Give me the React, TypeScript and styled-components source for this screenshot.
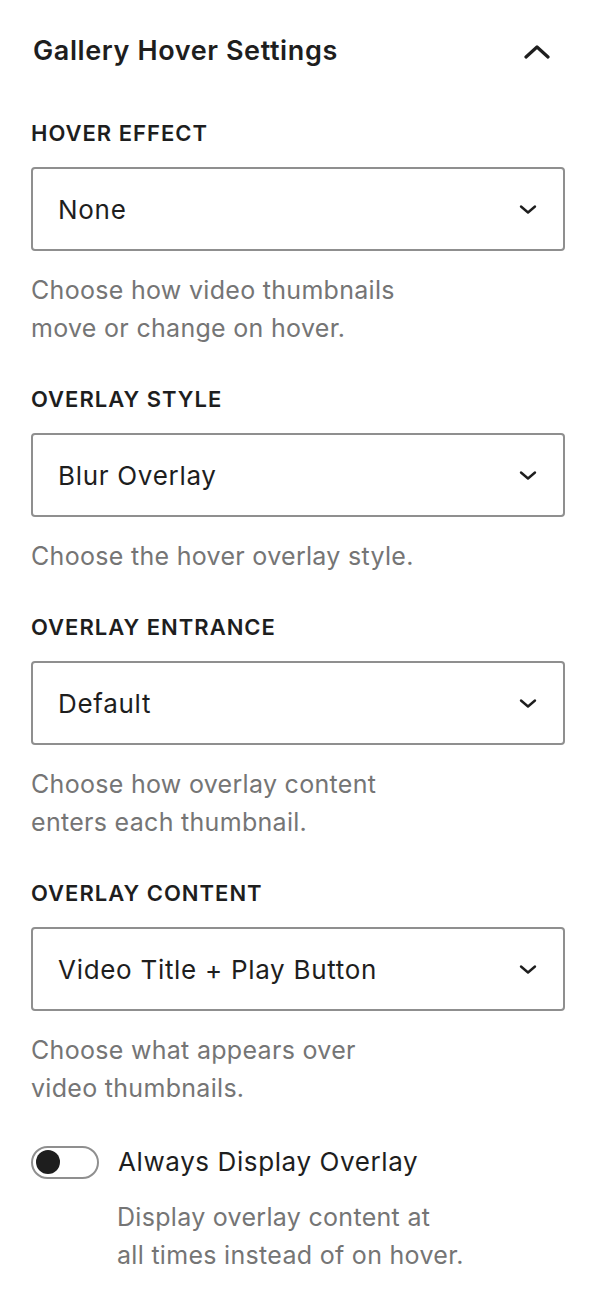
import styled, { createGlobalStyle } from "styled-components";

const GlobalStyle = createGlobalStyle`
  html, body {
    margin: 0;
    padding: 0;
    background: #ffffff;
  }
  body {
    font-family: Inter, "Noto Sans", "Liberation Sans", sans-serif;
    color: #1e1e1e;
    -webkit-font-smoothing: antialiased;
  }
`;

type SelectField = {
  label: string;
  value: string;
  help: string[];
};

const fields: SelectField[] = [
  {
    label: "Hover Effect",
    value: "None",
    help: ["Choose how video thumbnails", "move or change on hover."],
  },
  {
    label: "Overlay Style",
    value: "Blur Overlay",
    help: ["Choose the hover overlay style."],
  },
  {
    label: "Overlay Entrance",
    value: "Default",
    help: ["Choose how overlay content", "enters each thumbnail."],
  },
  {
    label: "Overlay Content",
    value: "Video Title + Play Button",
    help: ["Choose what appears over", "video thumbnails."],
  },
];

const ChevronDown = () => (
  <svg width="18" height="12" viewBox="0 0 18 12" fill="none">
    <path d="M2 3.5 L9 9.5 L16 3.5" stroke="#1e1e1e" strokeWidth="2.4" strokeLinecap="round" strokeLinejoin="round" />
  </svg>
);

const ChevronUp = () => (
  <svg width="28" height="16" viewBox="0 0 28 16" fill="none">
    <path d="M3 14 L14 4 L25 14" stroke="#1e1e1e" strokeWidth="3.2" strokeLinecap="round" strokeLinejoin="round" />
  </svg>
);

const App = () => {
  return (
    <>
      <GlobalStyle />
      <Panel>
        <PanelHeader>
          <PanelTitle>Gallery Hover Settings</PanelTitle>
          <ToggleButton aria-label="Collapse">
            <ChevronUp />
          </ToggleButton>
        </PanelHeader>
        <PanelBody>
          {fields.map((f) => (
            <Field key={f.label}>
              <FieldLabel>{f.label}</FieldLabel>
              <SelectBox>
                <SelectValue>{f.value}</SelectValue>
                <ChevronDown />
              </SelectBox>
              <Help>
                {f.help.map((line, i) => (
                  <span key={i}>
                    {line}
                    {i < f.help.length - 1 && <br />}
                  </span>
                ))}
              </Help>
            </Field>
          ))}
          <SwitchField>
            <SwitchRow>
              <Switch>
                <Knob />
              </Switch>
              <SwitchLabel>Always Display Overlay</SwitchLabel>
            </SwitchRow>
            <SwitchHelp>
              Display overlay content at
              <br />
              all times instead of on hover.
            </SwitchHelp>
          </SwitchField>
        </PanelBody>
      </Panel>
    </>
  );
};

export default App;

const Panel = styled.div`
  width: 600px;
  min-height: 1304px;
  box-sizing: border-box;
  padding: 31px 35px 40px 31px;
`;

const PanelHeader = styled.div`
  display: flex;
  align-items: center;
  justify-content: space-between;
  height: 40px;
`;

const PanelTitle = styled.h2`
  margin: 0 0 0 2px;
  font-size: 27px;
  font-weight: 600;
  line-height: 40px;
  letter-spacing: 0.6px;
  color: #1e1e1e;
`;

const ToggleButton = styled.button`
  display: flex;
  align-items: center;
  justify-content: center;
  border: 0;
  background: none;
  padding: 0;
  margin-right: 14px;
  cursor: pointer;
`;

const PanelBody = styled.div`
  display: flex;
  flex-direction: column;
  gap: 36px;
  margin-top: 46px;
`;

const Field = styled.div`
  display: flex;
  flex-direction: column;
`;

const FieldLabel = styled.div`
  font-size: 22px;
  font-weight: 600;
  line-height: 32px;
  text-transform: uppercase;
  letter-spacing: 1px;
  color: #1e1e1e;
  margin-bottom: 18px;
`;

const SelectBox = styled.div`
  display: flex;
  align-items: center;
  justify-content: space-between;
  height: 84px;
  box-sizing: border-box;
  border: 2px solid #8f8f8f;
  border-radius: 4px;
  padding: 0 26px 0 25px;
`;

const SelectValue = styled.span`
  font-size: 26px;
  letter-spacing: 0.7px;
  color: #1e1e1e;
`;

const Help = styled.p`
  margin: 20px 0 0;
  font-size: 25px;
  line-height: 38px;
  letter-spacing: 0.3px;
  color: #757575;
`;

const SwitchField = styled.div`
  display: flex;
  flex-direction: column;
`;

const SwitchRow = styled.div`
  display: flex;
  align-items: center;
  gap: 19px;
  height: 38px;
`;

const Switch = styled.div`
  width: 68px;
  height: 33px;
  box-sizing: border-box;
  border: 2px solid #8f8f8f;
  border-radius: 17px;
  display: flex;
  align-items: center;
  padding-left: 3px;
`;

const Knob = styled.div`
  width: 24px;
  height: 24px;
  border-radius: 50%;
  background: #1e1e1e;
`;

const SwitchLabel = styled.span`
  font-size: 26px;
  letter-spacing: 0.6px;
  color: #1e1e1e;
  line-height: 38px;
`;

const SwitchHelp = styled.p`
  margin: 17px 0 0 86px;
  font-size: 25px;
  line-height: 38px;
  letter-spacing: 0.3px;
  color: #757575;
`;
